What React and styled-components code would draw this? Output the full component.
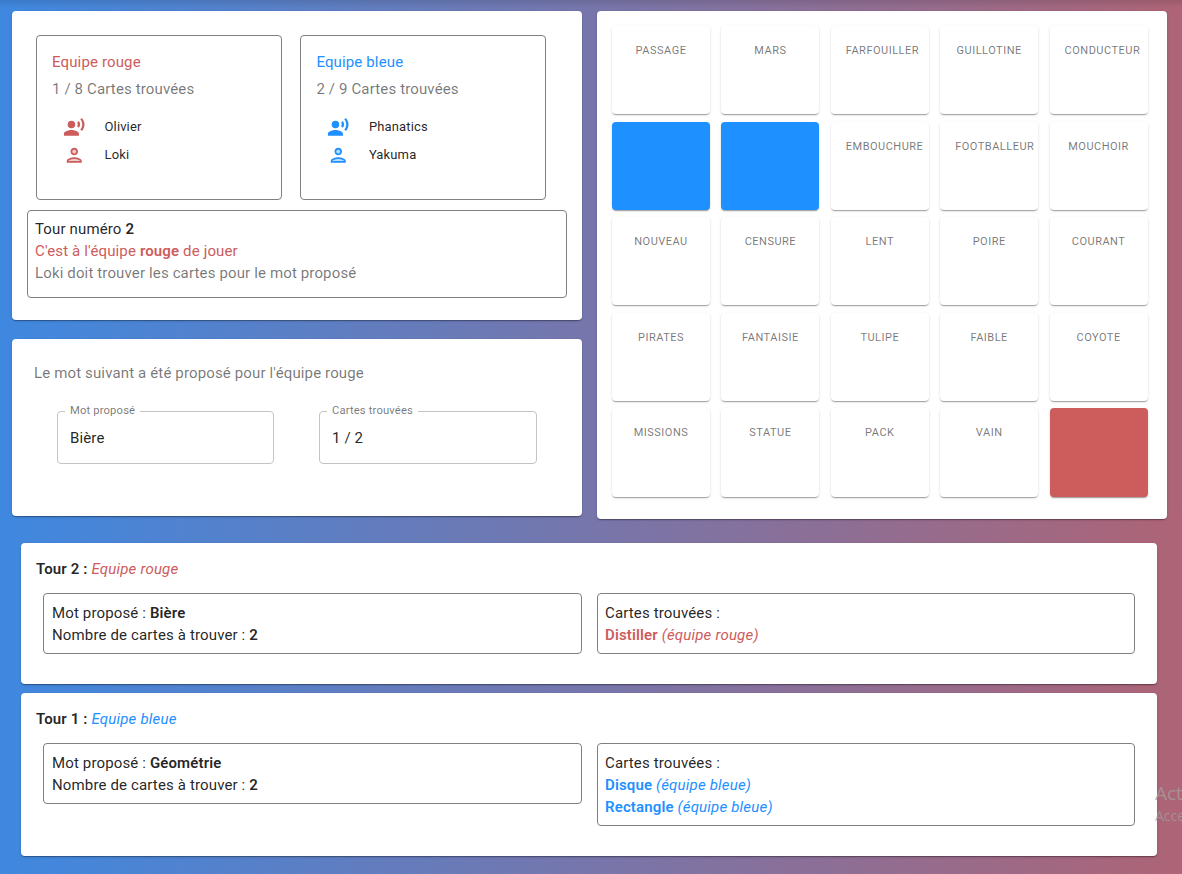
import React from "react";
import styled, { createGlobalStyle } from "styled-components";

const RED = "#cd5c5c";
const BLUE = "#1e90ff";
const tone = { red: RED, blue: BLUE };

const GlobalStyle = createGlobalStyle`
  *, *::before, *::after { box-sizing: border-box; }
  html, body, #root { height: 100%; }
  body {
    margin: 0;
    overflow: hidden;
    font-family: Roboto, "Liberation Sans", sans-serif;
    font-size: 15px;
    font-weight: 400;
    line-height: 22px;
    letter-spacing: 0.14px;
    color: rgba(0, 0, 0, 0.87);
  }
  b { font-weight: 600; }
  i { letter-spacing: 0.2px; }
`;

const Page = styled.main`
  position: relative;
  height: 874px;
  padding: 11px 15px 0 12px;
  overflow: hidden;
  background:
    linear-gradient(to bottom, rgba(0, 0, 0, 0.1), rgba(0, 0, 0, 0) 8px),
    linear-gradient(to right, #3f88e0, #ae6476);
`;

const Paper = styled.section`
  background: #fff;
  border-radius: 4px;
  box-shadow: 0 2px 1px -1px rgba(0, 0, 0, 0.2), 0 1px 1px rgba(0, 0, 0, 0.14),
    0 1px 3px rgba(0, 0, 0, 0.12);
`;

const TopArea = styled.div`
  display: grid;
  grid-template-columns: 570px 570px;
  column-gap: 15px;
  align-items: start;
`;

const LeftColumn = styled.div`
  display: flex;
  flex-direction: column;
  gap: 19px;
`;

const StatusPaper = styled(Paper)`
  height: 309px;
  padding: 24px 15px 0;
`;

const Outlined = styled.div`
  border: 1px solid #808080;
  border-radius: 4px;
`;

const Teams = styled.div`
  display: flex;
  gap: 18.4px;
  padding-left: 9px;
`;

const TeamBox = styled(Outlined)`
  flex: none;
  width: 246px;
  height: 165px;
  padding: 15px;
`;

const TeamName = styled.div`
  color: ${(p) => tone[p.$team]};
`;

const TeamScore = styled.div`
  margin-top: 5px;
  color: rgba(0, 0, 0, 0.54);
`;

const Player = styled.div`
  display: flex;
  align-items: center;
  gap: 19px;
  height: 28px;
  padding-left: 11px;
  font-size: 13px;
  font-weight: 400;
  color: ${(p) => tone[p.$team]};
`;

const Players = styled.div`
  margin-top: 13px;
`;

const PlayerName = styled.span`
  color: rgba(0, 0, 0, 0.87);
`;

const Icon = styled.svg`
  width: 22.5px;
  height: 22.5px;
  margin-top: 1px;
  fill: currentColor;
`;

const TurnBox = styled(Outlined)`
  height: 88px;
  margin-top: 10px;
  padding: 7px;
`;

const Line = styled.div`
  color: ${(p) => (p.$team ? tone[p.$team] : p.$muted ? "rgba(0, 0, 0, 0.54)" : "inherit")};
`;

const WordPaper = styled(Paper)`
  height: 177px;
  padding: 23px 22px 0;
`;

const Fields = styled.div`
  display: flex;
  gap: 45px;
  margin-top: 21px;
  padding-left: 23px;
`;

const Field = styled.fieldset`
  width: ${(p) => p.$width}px;
  height: 59px;
  min-width: 0;
  margin: 0;
  padding: 0 12px;
  border: 1px solid #c4c4c4;
  border-radius: 4px;
`;

const FieldLabel = styled.legend`
  margin-left: -5px;
  padding: 0 5px;
  font-size: 11.25px;
  line-height: 12px;
  color: rgba(0, 0, 0, 0.54);
`;

const FieldValue = styled.div`
  margin-top: 10px;
  font-weight: 400;
`;

const BoardPaper = styled(Paper)`
  height: 508px;
  padding: 14.97px 19px 0 15px;
`;

const Board = styled.div`
  display: grid;
  grid-template-columns: repeat(5, 98px);
  grid-template-rows: repeat(4, 88.35px) 88.7px;
  gap: 7.2px 11.4px;
`;

const WordCard = styled(Paper)`
  display: flex;
  padding: 15px;
  font-size: 11px;
  line-height: 20px;
  letter-spacing: 0.5px;
  text-transform: uppercase;
  color: rgba(0, 0, 0, 0.54);
  background: ${(p) => (p.$team ? tone[p.$team] : "#fff")};
`;

const Word = styled.span`
  flex: 1 0 auto;
  text-align: center;
`;

const History = styled.div`
  display: flex;
  flex-direction: column;
  gap: 9px;
  width: 1136px;
  margin: 24px 0 0 9px;
`;

const TurnPaper = styled(Paper)`
  padding: 15px 22px 30px 15px;
`;

const TurnTitle = styled.div`
  i { color: ${(p) => tone[p.$team]}; }
`;

const TurnDetails = styled.div`
  display: grid;
  grid-template-columns: 539px 538px;
  column-gap: 15px;
  align-items: start;
  margin: 13px 0 0 7px;
`;

const DetailBox = styled(Outlined)`
  padding: 8px 8px 7px;
`;

const FoundBox = styled(DetailBox)`
  padding-left: 7px;
`;

const FoundCard = styled.div`
  color: ${(p) => tone[p.$team]};
`;

const Watermark = styled.div`
  position: absolute;
  top: 781px;
  left: 1155px;
  font-family: "Open Sans", "Noto Sans", sans-serif;
  font-weight: 400;
  letter-spacing: 0;
  white-space: nowrap;
  color: rgba(160, 160, 160, 0.75);
`;

const WatermarkTitle = styled.div`
  font-size: 19px;
  line-height: 24px;
`;

const WatermarkText = styled.div`
  font-size: 14px;
  line-height: 22px;
`;

const SpeakerIcon = () => (
  <Icon viewBox="0 0 24 24">
    <circle cx="9" cy="9" r="4" />
    <path d="M9 15c-2.67 0-8 1.34-8 4v2h16v-2c0-2.66-5.33-4-8-4zm7.76-9.64l-1.68 1.69c.84 1.18.84 2.71 0 3.89l1.68 1.69c2.02-2.02 2.02-5.07 0-7.27zM20.07 2l-1.63 1.63c2.77 3.02 2.77 7.56 0 10.74L20.07 16c3.9-3.89 3.91-9.95 0-14z" />
  </Icon>
);

const PersonIcon = () => (
  <Icon viewBox="0 0 24 24">
    <path d="M12 16c-2.69 0-5.77 1.28-6 2h12c-.2-.71-3.3-2-6-2z" opacity=".3" />
    <circle cx="12" cy="8" r="2" opacity=".3" />
    <path d="M12 14c-2.67 0-8 1.34-8 4v2h16v-2c0-2.66-5.33-4-8-4zm-6 4c.22-.72 3.31-2 6-2 2.7 0 5.8 1.29 6 2H6zm6-6c2.21 0 4-1.79 4-4s-1.79-4-4-4-4 1.79-4 4 1.79 4 4 4zm0-6c1.1 0 2 .9 2 2s-.9 2-2 2-2-.9-2-2 .9-2 2-2z" />
  </Icon>
);

const teams = [
  { team: "red", name: "Equipe rouge", score: "1 / 8", master: "Olivier", guesser: "Loki" },
  { team: "blue", name: "Equipe bleue", score: "2 / 9", master: "Phanatics", guesser: "Yakuma" },
];

const cards = [
  "Passage", "Mars", "Farfouiller", "Guillotine", "Conducteur",
  { team: "blue" }, { team: "blue" }, "Embouchure", "Footballeur", "Mouchoir",
  "Nouveau", "Censure", "Lent", "Poire", "Courant",
  "Pirates", "Fantaisie", "Tulipe", "Faible", "Coyote",
  "Missions", "Statue", "Pack", "Vain", { team: "red" },
];

const turns = [
  { id: 2, team: "red", name: "Equipe rouge", word: "Bière", count: 2, found: ["Distiller"], label: "(équipe rouge)" },
  { id: 1, team: "blue", name: "Equipe bleue", word: "Géométrie", count: 2, found: ["Disque", "Rectangle"], label: "(équipe bleue)" },
];

export default function App() {
  return (
    <Page>
      <GlobalStyle />
      <TopArea>
        <LeftColumn>
          <StatusPaper>
            <Teams>
              {teams.map((t) => (
                <TeamBox key={t.team}>
                  <TeamName $team={t.team}>{t.name}</TeamName>
                  <TeamScore>{t.score} Cartes trouvées</TeamScore>
                  <Players>
                    <Player $team={t.team}>
                      <SpeakerIcon />
                      <PlayerName>{t.master}</PlayerName>
                    </Player>
                    <Player $team={t.team}>
                      <PersonIcon />
                      <PlayerName>{t.guesser}</PlayerName>
                    </Player>
                  </Players>
                </TeamBox>
              ))}
            </Teams>
            <TurnBox>
              <Line>Tour numéro <b>2</b></Line>
              <Line $team="red">C'est à l'équipe <b>rouge</b> de jouer</Line>
              <Line $muted>Loki doit trouver les cartes pour le mot proposé</Line>
            </TurnBox>
          </StatusPaper>
          <WordPaper>
            <Line $muted>Le mot suivant a été proposé pour l'équipe rouge</Line>
            <Fields>
              <Field $width={217}>
                <FieldLabel>Mot proposé</FieldLabel>
                <FieldValue>Bière</FieldValue>
              </Field>
              <Field $width={218}>
                <FieldLabel>Cartes trouvées</FieldLabel>
                <FieldValue>1 / 2</FieldValue>
              </Field>
            </Fields>
          </WordPaper>
        </LeftColumn>
        <BoardPaper>
          <Board>
            {cards.map((c, i) =>
              typeof c === "string" ? (
                <WordCard key={i}><Word>{c}</Word></WordCard>
              ) : (
                <WordCard key={i} $team={c.team} />
              )
            )}
          </Board>
        </BoardPaper>
      </TopArea>
      <History>
        {turns.map((t) => (
          <TurnPaper key={t.id}>
            <TurnTitle $team={t.team}><b>Tour {t.id} :</b> <i>{t.name}</i></TurnTitle>
            <TurnDetails>
              <DetailBox>
                <div>Mot proposé : <b>{t.word}</b></div>
                <div>Nombre de cartes à trouver : <b>{t.count}</b></div>
              </DetailBox>
              <FoundBox>
                <div>Cartes trouvées :</div>
                {t.found.map((f) => (
                  <FoundCard key={f} $team={t.team}><b>{f}</b> <i>{t.label}</i></FoundCard>
                ))}
              </FoundBox>
            </TurnDetails>
          </TurnPaper>
        ))}
      </History>
      <Watermark>
        <WatermarkTitle>Act</WatermarkTitle>
        <WatermarkText>Acce</WatermarkText>
      </Watermark>
    </Page>
  );
}
